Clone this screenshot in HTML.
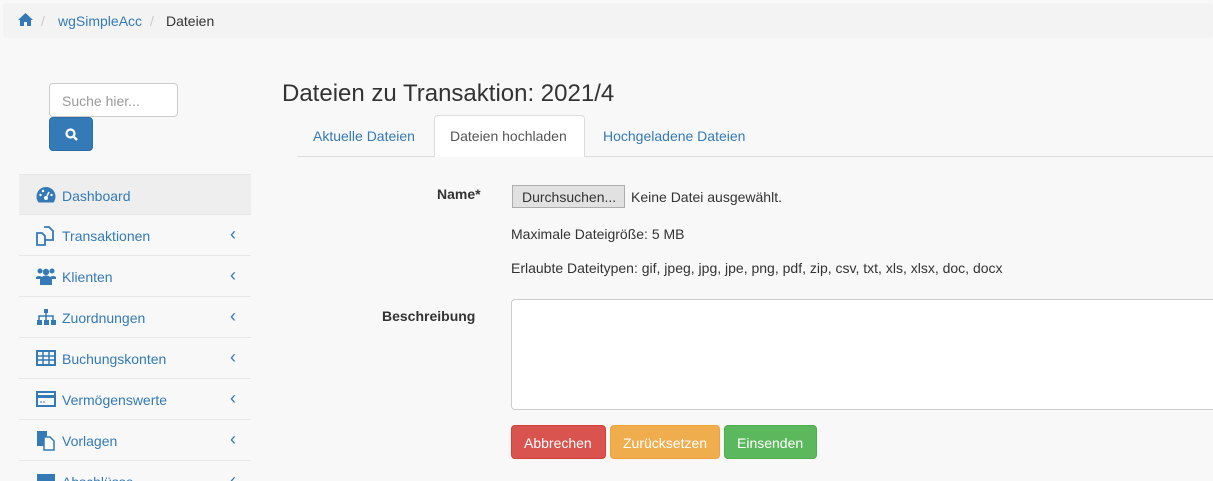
<!DOCTYPE html>
<html style="overflow:hidden;height:481px"><head><meta charset="utf-8"><style>
*{box-sizing:border-box}
body{margin:0;width:1213px;height:481px;overflow:hidden;background:#f8f8f8;font-family:"Liberation Sans",sans-serif;font-size:14px;color:#333;position:relative}
.bc{position:absolute;left:3px;top:3px;width:1210px;height:35px;background:#f3f3f3;border-radius:4px}
.bc span{position:absolute;top:10px}
.search{position:absolute;left:49px;top:83px;width:129px;height:34px;border:1px solid #ccc;border-radius:4px;background:#fff;color:#999;padding:9px 12px;font-size:14px}
.sbtn{position:absolute;left:49px;top:117px;width:44px;height:34px;background:#337ab7;border:1px solid #2e6da4;border-radius:4px}
.nav{position:absolute;left:19px;top:174px;width:232px}
.nav div{height:41px;border-bottom:1px solid #e7e7e7;position:relative;color:#337ab7;font-size:14px;padding:13px 0 0 43px}
.nav div:first-child{background:#eee;border-top:1px solid #e7e7e7}
.nav div i{position:absolute;right:15px;top:9px;font-style:normal;font-size:18px}
.nav svg{position:absolute;left:17px;top:11px}
h1{position:absolute;left:282px;top:80px;margin:0;font-size:24px;font-weight:normal}
.tabs{position:absolute;left:297px;top:156px;width:916px;border-top:1px solid #ddd}
.tab{position:absolute;top:128px;color:#337ab7;font-size:14px}
.act{position:absolute;left:434px;top:115px;width:151px;height:42px;background:#fff;border:1px solid #ddd;border-bottom:none;border-radius:4px 4px 0 0;padding:12px 15px;color:#555}
.lbl{position:absolute;font-weight:bold;text-align:right}
.t{position:absolute;font-size:14px}
.file{position:absolute;left:512px;top:185px;width:113px;height:23px;background:#e1e1e1;border:1px solid #adadad;padding:3px 9px;font-size:14px}
textarea{position:absolute;left:511px;top:299px;width:710px;height:111px;border:1px solid #ccc;border-radius:4px;background:#fff;resize:none}
.b{position:absolute;top:425px;height:34px;border-radius:4px;color:#fff;padding:9px 12px;font-size:14px}
</style></head><body>
<div class="bc">
<svg style="position:absolute;left:15px;top:10px" width="15" height="13" viewBox="0 0 15 13"><path d="M7.5 0L0 7h2v6h4V9h3v4h4V7h2z" fill="#337ab7"/></svg>
<span style="left:38px;color:#ccc">/</span><span style="left:55px;color:#337ab7">wgSimpleAcc</span><span style="left:147px;color:#ccc">/</span><span style="left:163px">Dateien</span>
</div>
<div class="search">Suche hier...</div>
<div class="sbtn"><svg style="position:absolute;left:15px;top:10px" width="13" height="13" viewBox="0 0 13 13"><circle cx="5.5" cy="5.5" r="4" fill="none" stroke="#fff" stroke-width="2.2"/><path d="M8.5 8.5l3.5 3.5" stroke="#fff" stroke-width="2.5"/></svg></div>
<div class="nav">
<div><svg width="20" height="18" viewBox="0 0 20 18"><path d="M10 1a9.5 9.5 0 0 0-9.5 9.5c0 2.5 .8 4.5 2 6h15c1.2-1.5 2-3.5 2-6A9.5 9.5 0 0 0 10 1z" fill="#337ab7"/><circle cx="10" cy="12" r="2" fill="#fff"/><path d="M10 12l3-6" stroke="#fff" stroke-width="1.5"/><circle cx="4.5" cy="9" r="1.2" fill="#fff"/><circle cx="7" cy="5" r="1.2" fill="#fff"/><circle cx="15.5" cy="9" r="1.2" fill="#fff"/></svg>Dashboard</div>
<div><svg width="20" height="20" viewBox="0 0 20 20"><path d="M1 7h5l3 3v9H1z" fill="none" stroke="#337ab7" stroke-width="1.8"/><path d="M8 1h5l4 4v9H9" fill="none" stroke="#337ab7" stroke-width="1.8"/></svg>Transaktionen<i>&lsaquo;</i></div>
<div><svg width="20" height="18" viewBox="0 0 20 18"><circle cx="10" cy="5" r="3.2" fill="#337ab7"/><circle cx="4" cy="4" r="2.5" fill="#337ab7"/><circle cx="16" cy="4" r="2.5" fill="#337ab7"/><path d="M4 18v-5a6 4.5 0 0 1 12 0v5z M0 12v-2a4 3 0 0 1 6 0v2z M14 10a4 3 0 0 1 6 0v2h-6z" fill="#337ab7"/></svg>Klienten<i>&lsaquo;</i></div>
<div><svg width="20" height="18" viewBox="0 0 20 18"><rect x="8" y="1" width="4" height="4" fill="#337ab7"/><rect x="1" y="12" width="5" height="5" fill="#337ab7"/><rect x="8" y="12" width="5" height="5" fill="#337ab7"/><rect x="15" y="12" width="5" height="5" fill="#337ab7"/><path d="M10 5v7M3 12V8h14v4" stroke="#337ab7" stroke-width="1.5" fill="none"/></svg>Zuordnungen<i>&lsaquo;</i></div>
<div><svg width="20" height="18" viewBox="0 0 20 18"><rect x="1" y="2" width="18" height="14" fill="none" stroke="#337ab7" stroke-width="2"/><path d="M1 7h18M1 11h18M7 2v14M13 2v14" stroke="#337ab7" stroke-width="1.5"/></svg>Buchungskonten<i>&lsaquo;</i></div>
<div><svg width="20" height="18" viewBox="0 0 20 18"><rect x="1" y="2" width="18" height="14" fill="none" stroke="#337ab7" stroke-width="2"/><rect x="1" y="5" width="18" height="3" fill="#337ab7"/><path d="M4 12h2M7 12h2" stroke="#337ab7"/></svg>Vermögenswerte<i>&lsaquo;</i></div>
<div><svg width="20" height="20" viewBox="0 0 20 20"><rect x="1" y="0" width="10" height="15" fill="#337ab7"/><path d="M8 6h6l4 4v9H8z" fill="#fff" stroke="#337ab7" stroke-width="1.5"/></svg>Vorlagen<i>&lsaquo;</i></div>
<div><svg width="20" height="18" viewBox="0 0 20 18"><rect x="1" y="2" width="18" height="14" fill="#337ab7"/></svg>Abschlüsse<i>&lsaquo;</i></div>
</div>
<h1>Dateien zu Transaktion: 2021/4</h1>
<div class="tabs"></div>
<span class="tab" style="left:313px">Aktuelle Dateien</span>
<div class="act">Dateien hochladen</div>
<span class="tab" style="left:603px">Hochgeladene Dateien</span>
<div class="lbl" style="left:437px;top:186px">Name*</div>
<div class="file">Durchsuchen...</div>
<div class="t" style="left:631px;top:189px">Keine Datei ausgewählt.</div>
<div class="t" style="left:511px;top:226px">Maximale Dateigröße: 5 MB</div>
<div class="t" style="left:511px;top:260px">Erlaubte Dateitypen: gif, jpeg, jpg, jpe, png, pdf, zip, csv, txt, xls, xlsx, doc, docx</div>
<div class="lbl" style="left:382px;top:308px">Beschreibung</div>
<textarea></textarea>
<div class="b" style="left:511px;width:95px;background:#d9534f;border:1px solid #d43f3a">Abbrechen</div>
<div class="b" style="left:610px;width:110px;background:#f0ad4e;border:1px solid #eea236">Zurücksetzen</div>
<div class="b" style="left:724px;width:93px;background:#5cb85c;border:1px solid #4cae4c">Einsenden</div>
</body></html>
